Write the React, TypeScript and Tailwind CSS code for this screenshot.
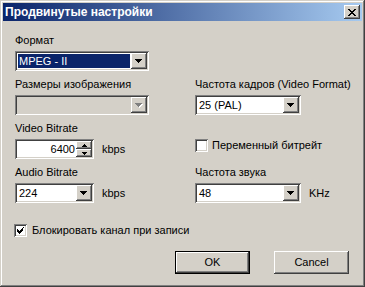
import type { ReactNode } from 'react';

const sunken =
  'shadow-[inset_1px_1px_#808080,inset_-1px_-1px_#ffffff,inset_2px_2px_#404040,inset_-2px_-2px_#d4d0c8]';
const raised =
  'shadow-[inset_-1px_-1px_#404040,inset_1px_1px_#ffffff,inset_-2px_-2px_#808080,inset_2px_2px_#d4d0c8]';

function Arrow({ disabled }: { disabled?: boolean }) {
  const c = disabled ? '#808080' : '#000000';
  return (
    <svg width="8" height="5" viewBox="0 0 8 5" shapeRendering="crispEdges">
      {disabled && <path d="M1 1h7v1H1zM2 2h5v1H2zM3 3h3v1H3zM4 4h1v1H4z" fill="#ffffff" />}
      <path d="M0 0h7v1H0zM1 1h5v1H1zM2 2h3v1H2zM3 3h1v1H3z" fill={c} />
    </svg>
  );
}

function DropBtn({ disabled }: { disabled?: boolean }) {
  return (
    <div className={`w-[16px] h-full bg-[#d4d0c8] flex items-center justify-center ${raised}`}>
      <Arrow disabled={disabled} />
    </div>
  );
}

function Combo({
  value,
  className,
  selected,
  disabled,
}: {
  value?: string;
  className: string;
  selected?: boolean;
  disabled?: boolean;
}) {
  return (
    <div className={`flex h-[20px] p-[2px] ${sunken} ${disabled ? 'bg-[#d4d0c8]' : 'bg-white'} ${className}`}>
      <div className="flex-1 p-[1px] flex">
        <div
          className={`flex-1 flex items-center pl-[1px] leading-none ${
            selected ? 'bg-[#0a246a] text-white' : 'text-black'
          }`}
        >
          {value}
        </div>
      </div>
      <DropBtn disabled={disabled} />
    </div>
  );
}

function Label({ children }: { children: ReactNode }) {
  return <div className="h-[13px] leading-[13px] mb-[4px] whitespace-nowrap">{children}</div>;
}

function Check({ checked }: { checked?: boolean }) {
  return (
    <div className={`w-[13px] h-[13px] bg-white shrink-0 flex items-center justify-center ${sunken}`}>
      {checked && (
        <svg width="7" height="7" viewBox="0 0 7 7" shapeRendering="crispEdges">
          <path
            d="M6 0h1v1H6zM5 1h1v3H5zM4 2h1v3H4zM3 3h1v3H3zM2 4h1v3H2zM1 3h1v3H1zM0 2h1v3H0z"
            fill="#000"
          />
        </svg>
      )}
    </div>
  );
}

function Spinner() {
  return (
    <div className={`flex h-[20px] p-[2px] bg-white w-[79px] ${sunken}`}>
      <div className="flex-1 flex items-center justify-end pr-[1px] leading-none">6400</div>
      <div className="w-[16px] flex flex-col">
        <div className={`h-1/2 bg-[#d4d0c8] flex items-center justify-center ${raised}`}>
          <svg width="5" height="3" viewBox="0 0 5 3" shapeRendering="crispEdges">
            <path d="M2 0h1v1H2zM1 1h3v1H1zM0 2h5v1H0z" fill="#000" />
          </svg>
        </div>
        <div className={`h-1/2 bg-[#d4d0c8] flex items-center justify-center ${raised}`}>
          <svg width="5" height="3" viewBox="0 0 5 3" shapeRendering="crispEdges">
            <path d="M0 0h5v1H0zM1 1h3v1H1zM2 2h1v1H2z" fill="#000" />
          </svg>
        </div>
      </div>
    </div>
  );
}

export default function App() {
  return (
    <div
      className={`w-[365px] h-[287px] bg-[#d4d0c8] p-[3px] flex flex-col text-[11px] text-black [font-family:'Liberation_Sans',Arial,sans-serif] shadow-[inset_-1px_-1px_#404040,inset_1px_1px_#d4d0c8,inset_-2px_-2px_#808080,inset_2px_2px_#ffffff]`}
    >
      {/* title bar */}
      <div className="h-[18px] flex items-center justify-between pl-[2px] pr-[2px] bg-[linear-gradient(to_right,#0a246a,#a6caf0)]">
        <span className="text-white font-bold text-[12px] leading-none">Продвинутые настройки</span>
        <div className={`w-[16px] h-[14px] bg-[#d4d0c8] flex items-center justify-center ${raised}`}>
          <svg width="8" height="7" viewBox="0 0 8 7" shapeRendering="crispEdges">
            <path
              d="M0 0h2v1H0zM6 0h2v1H6zM1 1h2v1H1zM5 1h2v1H5zM2 2h4v1H2zM3 3h2v1H3zM2 4h4v1H2zM1 5h2v1H1zM5 5h2v1H5zM0 6h2v1H0zM6 6h2v1H6z"
              fill="#000"
            />
          </svg>
        </div>
      </div>

      {/* body */}
      <div className="flex-1 flex flex-col pt-[13px] pl-[12px] pr-[13px]">
        <div className="grid grid-cols-[180px_1fr] gap-y-[7px]">
          <div>
            <Label>Формат</Label>
            <Combo value="MPEG - II" selected className="w-[134px]" />
          </div>
          <div />

          <div>
            <Label>Размеры изображения</Label>
            <Combo disabled className="w-[134px]" />
          </div>
          <div>
            <Label>Частота кадров (Video Format)</Label>
            <Combo value="25 (PAL)" className="w-[106px]" />
          </div>

          <div>
            <Label>Video Bitrate</Label>
            <div className="flex items-center gap-[8px]">
              <Spinner />
              <span>kbps</span>
            </div>
          </div>
          <div className="pt-[15px]">
            <div className="flex items-center gap-[4px]">
              <Check />
              <span>Переменный битрейт</span>
            </div>
          </div>

          <div>
            <Label>Audio Bitrate</Label>
            <div className="flex items-center gap-[8px]">
              <Combo value="224" className="w-[79px]" />
              <span>kbps</span>
            </div>
          </div>
          <div>
            <Label>Частота звука</Label>
            <div className="flex items-center gap-[8px]">
              <Combo value="48" className="w-[106px]" />
              <span>KHz</span>
            </div>
          </div>
        </div>

        <div className="flex items-center gap-[5px] mt-[19px] -ml-[1px]">
          <Check checked />
          <span>Блокировать канал при записи</span>
        </div>

        <div className="flex justify-end gap-[24px] mt-[12px]">
          <div className="w-[75px] h-[23px] border border-black">
            <div className={`w-full h-full bg-[#d4d0c8] flex items-center justify-center ${raised}`}>OK</div>
          </div>
          <div className={`w-[75px] h-[23px] bg-[#d4d0c8] flex items-center justify-center ${raised}`}>Cancel</div>
        </div>
      </div>
    </div>
  );
}
